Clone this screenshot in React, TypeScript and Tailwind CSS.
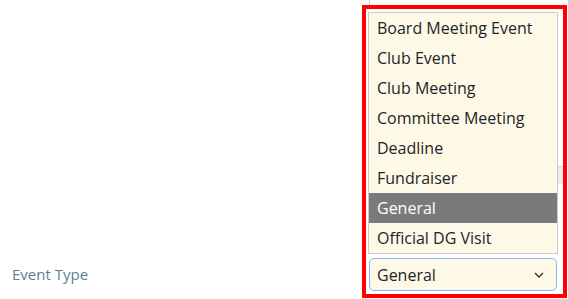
const options = [
  'Board Meeting Event',
  'Club Event',
  'Club Meeting',
  'Committee Meeting',
  'Deadline',
  'Fundraiser',
  'General',
  'Official DG Visit',
];

export default function App() {
  return (
    <div className="relative w-[568px] h-[299px] overflow-hidden bg-white font-['Open_Sans',sans-serif]">
      {/* bits of the form behind the open list */}
      <div className="absolute left-[369px] top-0 h-[6px] w-px bg-[#cfcfcf]" />
      <div className="absolute left-[540px] top-[166px] h-[18px] w-[24px] border-t border-[#d6d6d6] bg-[#ececec]" />

      <div className="flex h-full items-end pb-[8px]">
        <div className="flex w-full items-center justify-between">
          <label className="pl-[12px] text-[15px] text-[#5c7f91]">Event Type</label>
          <div className="mr-[11px] flex h-[33px] w-[188px] items-center justify-between rounded-[5px] border border-[#86b7fe] bg-[#fef9e7] pl-[7px] pr-[12px] text-[16px] text-[#212529]">
            <span>General</span>
            <svg width="10" height="6" viewBox="0 0 10 6" fill="none">
              <path d="M1 1l4 4 4-4" stroke="#333" strokeWidth="1.4" />
            </svg>
          </div>
        </div>
      </div>

      {/* open list */}
      <ul className="absolute left-[368px] top-[12px] w-[190px] border border-[#cccccc] bg-[#fef9e7] text-[16px] text-[#212529]">
        {options.map((o) => (
          <li
            key={o}
            className={
              o === 'General'
                ? 'flex h-[30px] items-center bg-[#7a7a7a] pl-[8px] text-white'
                : 'flex h-[30px] items-center pl-[8px]'
            }
          >
            {o}
          </li>
        ))}
      </ul>

      {/* highlight annotation */}
      <div className="pointer-events-none absolute left-[362px] top-[5px] h-[293px] w-[205px] border-4 border-[#ff0000]" />
    </div>
  );
}
